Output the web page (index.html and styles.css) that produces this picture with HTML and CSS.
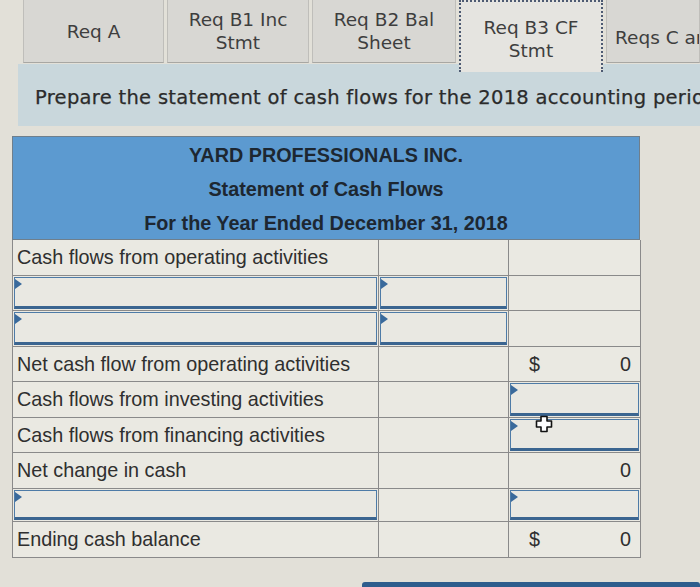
FILE: index.html
```html
<!DOCTYPE html>
<html>
<head>
<meta charset="utf-8">
<link rel="stylesheet" href="styles.css">
</head>
<body>
<div class="page">
  <div class="tabs">
    <div class="tab w1">Req A</div>
    <div class="tab w2">Req B1 Inc<br>Stmt</div>
    <div class="tab w3">Req B2 Bal<br>Sheet</div>
    <div class="tab w4 active">Req B3 CF<br>Stmt</div>
    <div class="tab last">Reqs C and D</div>
  </div>
  <div class="instr">Prepare the statement of cash flows for the 2018 accounting period.</div>
  <div class="sheet">
    <div class="head">
      <div class="hline">YARD PROFESSIONALS INC.</div>
      <div class="hline">Statement of Cash Flows</div>
      <div class="hline">For the Year Ended December 31, 2018</div>
    </div>
    <div class="grid">
      <div class="cell lab r1">Cash flows from operating activities</div><div class="cell r1"></div><div class="cell r1"></div>

      <div class="cell r2"><div class="inp"></div></div><div class="cell r2"><div class="inp"></div></div><div class="cell r2"></div>

      <div class="cell r3"><div class="inp"></div></div><div class="cell r3"><div class="inp"></div></div><div class="cell r3"></div>

      <div class="cell lab r4">Net cash flow from operating activities</div><div class="cell r4"></div><div class="cell r4 amt"><span>$</span><span>0</span></div>

      <div class="cell lab r5">Cash flows from investing activities</div><div class="cell r5"></div><div class="cell r5"><div class="inp"></div></div>

      <div class="cell lab r6">Cash flows from financing activities</div><div class="cell r6"></div><div class="cell r6"><div class="inp"></div></div>

      <div class="cell lab r7">Net change in cash</div><div class="cell r7"></div><div class="cell r7 amt"><span></span><span>0</span></div>

      <div class="cell r8"><div class="inp"></div></div><div class="cell r8"></div><div class="cell r8"><div class="inp"></div></div>

      <div class="cell lab r9">Ending cash balance</div><div class="cell r9"></div><div class="cell r9 amt"><span>$</span><span>0</span></div>
    </div>
    <svg class="cursor" width="18" height="18" viewBox="0 0 18 18">
      <path d="M6 1.5h6v4.5h4.5v6H12v4.5H6V12H1.5V6H6z" fill="#fff" stroke="#111" stroke-width="1.6" stroke-linejoin="round"/>
    </svg>
  </div>
  <div class="nextbar"></div>
</div>
</body>
</html>
```
FILE: styles.css
```css
html, body {
  margin: 0;
  padding: 0;
}
body {
  background: #e2e0d8;
  width: 700px;
  height: 587px;
  overflow: hidden;
}
.page {
  width: 700px;
  height: 587px;
  overflow: hidden;
}
.tabs {
  display: flex;
  align-items: flex-start;
  height: 64px;
  margin-left: 23px;
  gap: 3px;
}
.tab {
  box-sizing: border-box;
  height: 63px;
  background: #d8d7d3;
  border-left: 1px solid #bfbeba;
  border-right: 1px solid #bfbeba;
  border-bottom: 1px solid #a8a7a3;
  display: flex;
  align-items: center;
  justify-content: center;
  text-align: center;
  font-family: "DejaVu Sans", Verdana, sans-serif;
  font-size: 18.5px;
  line-height: 23px;
  color: #3e3e3e;
  flex: none;
}
.w1 { width: 141px; }
.w2 { width: 142px; }
.w3 { width: 144px; }
.w4 { width: 144px; }
.tab.active {
  height: 72px;
  background: #e5e4e0;
  border: 2px dotted #4d5a72;
  border-bottom: none;
  position: relative;
  z-index: 1;
  padding-top: 4px;
}
.tab.last {
  flex: 1;
  justify-content: flex-start;
  padding-left: 8px;
  white-space: nowrap;
  overflow: hidden;
  padding-top: 12px;
}
.instr {
  margin-left: 18px;
  height: 56px;
  background: #c9d7dc;
  padding-left: 17px;
  padding-top: 6px;
  font-family: "DejaVu Sans", Verdana, sans-serif;
  font-size: 19.5px;
  letter-spacing: 0.3px;
  line-height: 56px;
  color: #2b2b2b;
  white-space: nowrap;
  overflow: hidden;
  -webkit-text-stroke: 0.25px #2b2b2b;
}
.sheet {
  position: relative;
  margin-top: 10px;
  margin-left: 12px;
  width: 628px;
}
.head {
  box-sizing: border-box;
  height: 104px;
  background: #5c9ad0;
  border: 1px solid #6f7f8c;
  font-family: "Liberation Sans", Arial, sans-serif;
  font-weight: bold;
  font-size: 19.8px;
  line-height: 34px;
  color: #1d2731;
  text-align: center;
  padding-top: 1px;
}
.grid {
  display: grid;
  grid-template-columns: 366px 130px 132px;
  border-left: 1px solid #8a8a8a;
}
.cell {
  box-sizing: border-box;
  background: #eae9e2;
  border-right: 1px solid #8a8a8a;
  border-bottom: 1px solid #8a8a8a;
  font-family: "Liberation Sans", Arial, sans-serif;
  font-size: 19.8px;
  color: #2f2f2f;
  display: flex;
  align-items: center;
  padding: 1px;
}
.lab {
  padding-left: 4px;
}
.r1 { height: 36px; }
.r2 { height: 35px; }
.r3 { height: 36px; }
.r4 { height: 35px; }
.r5 { height: 36px; }
.r6 { height: 35px; }
.r7 { height: 36px; }
.r8 { height: 33px; }
.r9 { height: 36px; }
.amt {
  justify-content: space-between;
  padding-left: 20px;
  padding-right: 9px;
}
.inp {
  position: relative;
  box-sizing: border-box;
  width: 100%;
  height: 100%;
  border: 1px solid #4e7ba7;
  border-bottom: 3px solid #3b6590;
  background: #e9e8e2;
}
.inp::before {
  content: "";
  position: absolute;
  left: 0;
  top: 1px;
  width: 0;
  height: 0;
  border-left: 7px solid #3a6a9c;
  border-top: 5px solid transparent;
  border-bottom: 5px solid transparent;
}
.cursor {
  position: absolute;
  left: 523px;
  top: 279px;
}
.nextbar {
  margin-top: 24px;
  margin-left: 362px;
  height: 12px;
  background: #2e5d8d;
  border-radius: 3px 3px 0 0;
}
```
